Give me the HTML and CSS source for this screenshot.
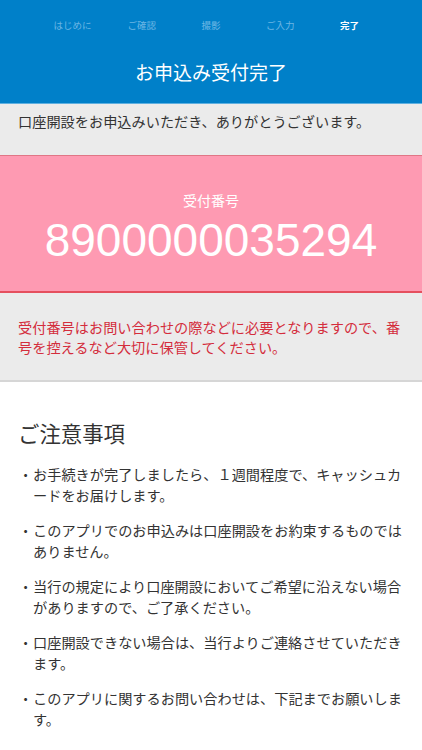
FILE: index.html
```html
<!DOCTYPE html>
<html lang="ja">
<head>
    <meta charset="UTF-8">
    <meta name="viewport" content="width=device-width, initial-scale=1.0">
    <title>お申込み受付完了</title>
    <link rel="stylesheet" href="styles.css">
</head>
<body>
    <header class="header">
        <ul class="steps">
            <li>はじめに</li>
            <li>ご確認</li>
            <li>撮影</li>
            <li>ご入力</li>
            <li class="current">完了</li>
        </ul>
        <h1>お申込み受付完了</h1>
    </header>

    <div class="thanks">
        <p>口座開設をお申込みいただき、ありがとうございます。</p>
    </div>

    <div class="receipt">
        <div class="receipt-label">受付番号</div>
        <div class="receipt-number">8900000035294</div>
    </div>

    <div class="notice">
        <p>受付番号はお問い合わせの際などに必要となりますので、番号を控えるなど大切に保管してください。</p>
    </div>

    <section class="caution">
        <h2>ご注意事項</h2>
        <ul>
            <li><span class="dot">・</span><span>お手続きが完了しましたら、１週間程度で、キャッシュカードをお届けします。</span></li>
            <li><span class="dot">・</span><span>このアプリでのお申込みは口座開設をお約束するものではありません。</span></li>
            <li><span class="dot">・</span><span>当行の規定により口座開設においてご希望に沿えない場合がありますので、ご了承ください。</span></li>
            <li><span class="dot">・</span><span>口座開設できない場合は、当行よりご連絡させていただきます。</span></li>
            <li><span class="dot">・</span><span>このアプリに関するお問い合わせは、下記までお願いします。</span></li>
        </ul>
    </section>
</body>
</html>
```

FILE: styles.css
```css
body {
    margin: 0;
    padding: 0;
    font-family: "Noto Sans CJK JP", "Noto Sans", sans-serif;
    color: #333;
    background-color: #fff;
}
p, ul, h1, h2 {
    margin: 0;
    padding: 0;
}
.header {
    background-color: #0080c9;
    border-bottom: 1px solid #5fb0e0;
    height: 103px;
    color: #fff;
}
.steps {
    list-style: none;
    display: flex;
    padding: 16px 38px 0;
    height: 18px;
}
.steps li {
    flex: 1;
    text-align: center;
    font-size: 9.5px;
    line-height: 18px;
    color: #6cb6e4;
}
.steps li.current {
    color: #fff;
    font-weight: bold;
}
.header h1 {
    text-align: center;
    font-size: 19px;
    font-weight: normal;
    line-height: 28px;
    margin-top: 24px;
}
.thanks {
    background-color: #ebebeb;
    padding: 7px 18px 22px;
    height: 22px;
}
.thanks p, .notice p {
    font-size: 14.2px;
    line-height: 21px;
}
.receipt {
    background-color: #fe9ab2;
    border-top: 1px solid #e07686;
    border-bottom: 2px solid #e5505e;
    height: 135px;
    color: #fff;
    text-align: center;
}
.receipt-label {
    font-size: 14px;
    line-height: 20px;
    padding-top: 34px;
}
.receipt-number {
    font-family: "Liberation Sans", Arial, sans-serif;
    font-size: 46px;
    line-height: 52px;
    margin-top: 4px;
}
.notice {
    background-color: #ebebeb;
    border-bottom: 2px solid #d6d6d6;
    padding: 25px 18px 0;
    height: 62px;
}
.notice p {
    color: #d42d3c;
    line-height: 19.5px;
}
.caution {
    padding: 36px 18px 0;
}
.caution h2 {
    font-size: 21.4px;
    font-weight: normal;
    line-height: 30px;
    margin-bottom: 16px;
}
.caution ul {
    list-style: none;
}
.caution li {
    display: flex;
    font-size: 14.2px;
    line-height: 21px;
    margin-bottom: 14px;
}
.caution .dot {
    flex: none;
    width: 15px;
    text-align: center;
}
```
